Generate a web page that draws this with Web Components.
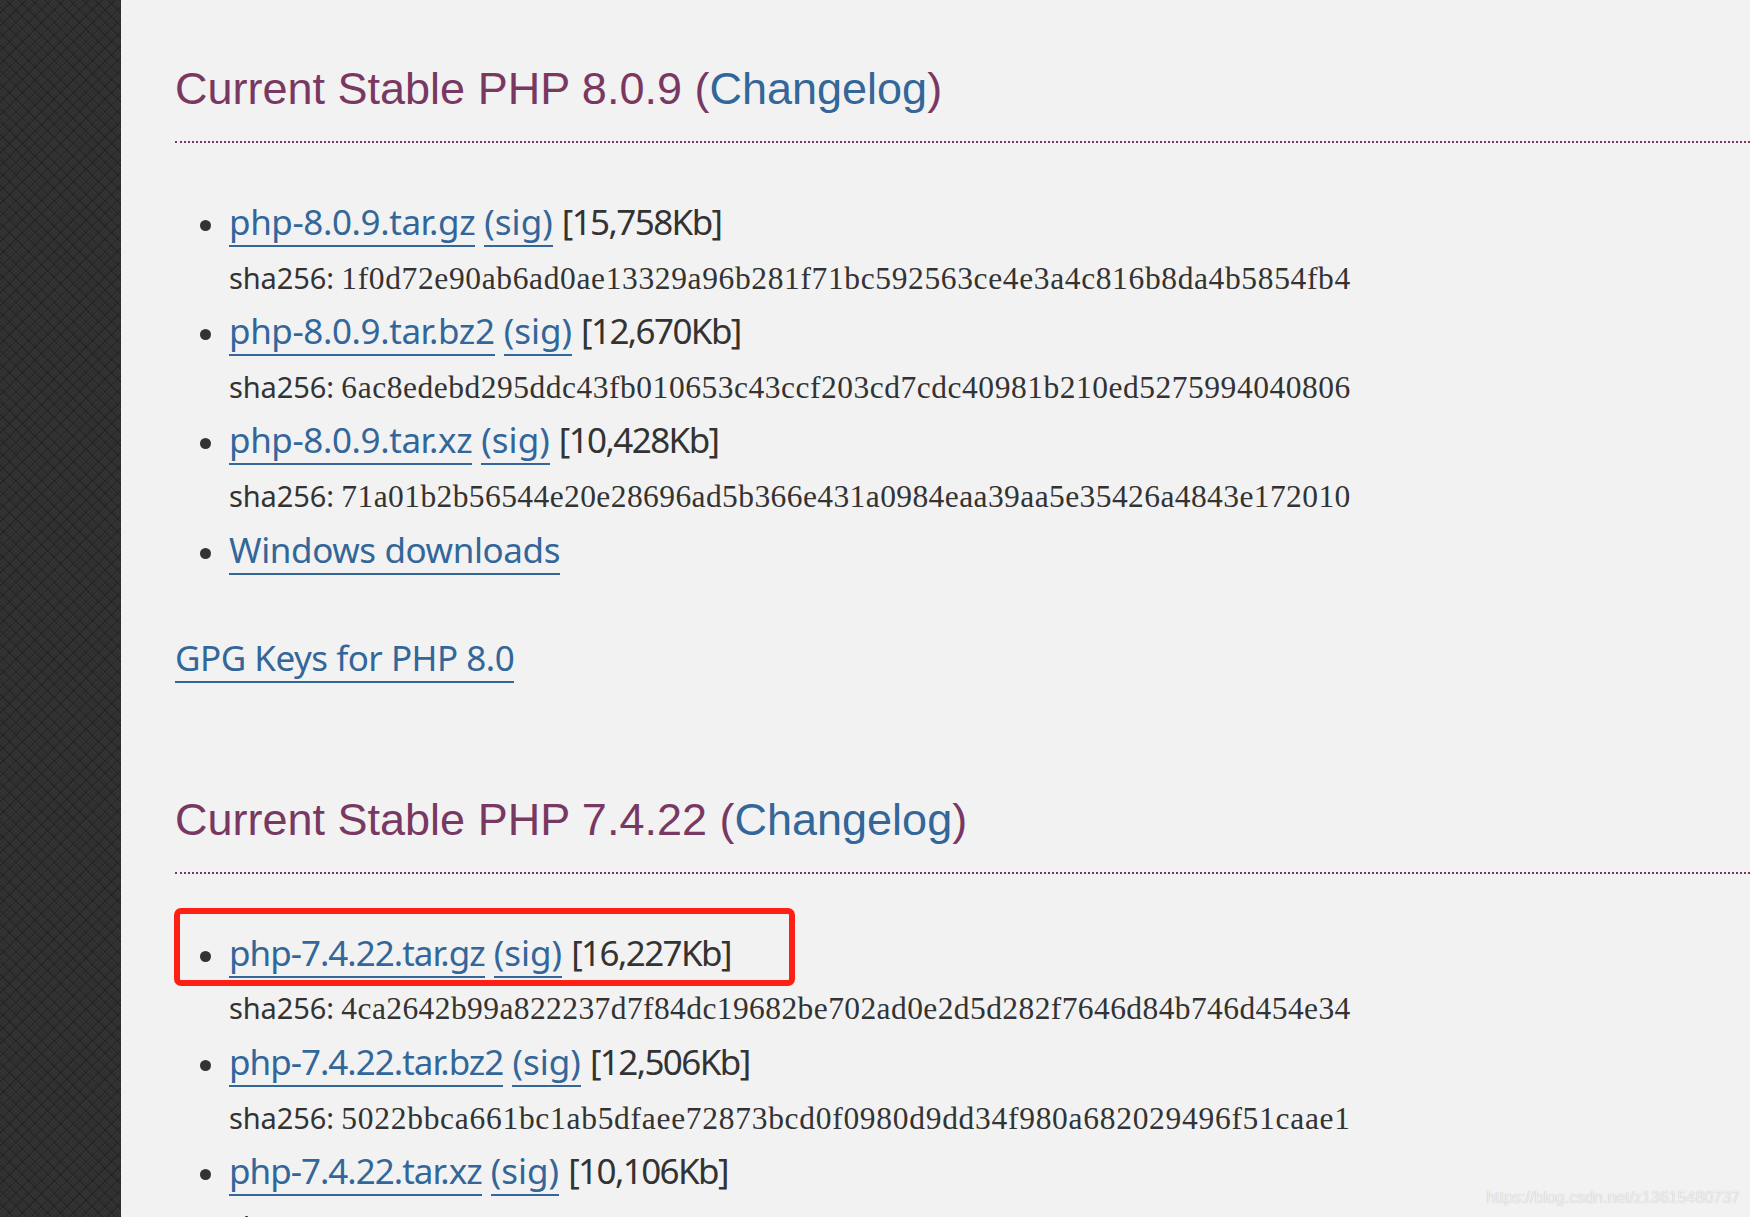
<!DOCTYPE html>
<html>
<head>
<meta charset="utf-8">
<title>Downloads</title>
<style>
  html, body { margin: 0; height: 100%; overflow: hidden; background: #f2f2f2; }
</style>
</head>
<body>
<download-page>
  <release-section version="8.0.9">
    <release-file track="-0.4" name="php-8.0.9.tar.gz" size="15,758Kb" hash="1f0d72e90ab6ad0ae13329a96b281f71bc592563ce4e3a4c816b8da4b5854fb4"></release-file>
    <release-file track="-0.4" name="php-8.0.9.tar.bz2" size="12,670Kb" hash="6ac8edebd295ddc43fb010653c43ccf203cd7cdc40981b210ed5275994040806"></release-file>
    <release-file track="-0.4" name="php-8.0.9.tar.xz" size="10,428Kb" hash="71a01b2b56544e20e28696ad5b366e431a0984eaa39aa5e35426a4843e172010"></release-file>
    <release-file track="-0.4" name="Windows downloads"></release-file>
    <a slot="keys" href="#">GPG Keys for PHP 8.0</a>
  </release-section>
  <release-section version="7.4.22">
    <release-file track="-1" name="php-7.4.22.tar.gz" size="16,227Kb" hash="4ca2642b99a822237d7f84dc19682be702ad0e2d5d282f7646d84b746d454e34"></release-file>
    <release-file track="-1" name="php-7.4.22.tar.bz2" size="12,506Kb" hash="5022bbca661bc1ab5dfaee72873bcd0f0980d9dd34f980a682029496f51caae1"></release-file>
    <release-file track="-1" name="php-7.4.22.tar.xz" size="10,106Kb" hash=""></release-file>
  </release-section>
</download-page>

<script>
class DownloadPage extends HTMLElement {
  constructor () {
    super()
    this.shadow = this.attachShadow({ mode: 'open' })
  }

  connectedCallback () {
    this.shadow.innerHTML =
      /* html */`
      <style>
      :host {
        display: flex;
        height: 1217px;
        overflow: hidden;
        position: relative;
        background: #f2f2f2;
      }

      .sidebar {
        flex: 0 0 121px;
        background-color: #343434;
        background-image:
          repeating-linear-gradient(45deg, rgba(0, 0, 0, 0.14) 0 2px, transparent 2px 9px),
          repeating-linear-gradient(-45deg, rgba(0, 0, 0, 0.14) 0 2px, transparent 2px 9px),
          repeating-linear-gradient(45deg, rgba(0, 0, 0, 0.08) 0 1px, transparent 1px 3px),
          repeating-linear-gradient(-45deg, rgba(0, 0, 0, 0.08) 0 1px, transparent 1px 3px);
      }

      .content {
        flex: 1;
        min-width: 0;
        padding: 62px 0 0 54px;
      }

      .mark {
        position: absolute;
        box-sizing: border-box;
        left: 174px;
        top: 908px;
        width: 621px;
        height: 78px;
        border: 6px solid #ff2015;
        border-radius: 7px;
      }

      .watermark {
        position: absolute;
        right: 10px;
        top: 1189px;
        font: 16px "Liberation Sans", sans-serif;
        color: rgba(255, 255, 255, 0.8);
        text-shadow: 0 0 1px rgba(0, 0, 0, 0.3);
      }
      </style>

      <div class="sidebar"></div>
      <div class="content"><slot></slot></div>
      <div class="mark"></div>
      <div class="watermark">https://blog.csdn.net/z13615480737</div>
      `
  }
}

class ReleaseSection extends HTMLElement {
  constructor () {
    super()
    this.shadow = this.attachShadow({ mode: 'open' })
  }

  connectedCallback () {
    const version = this.getAttribute('version')
    this.shadow.innerHTML =
      /* html */`
      <style>
      :host {
        display: block;
        margin-bottom: 107px;
      }

      h3 {
        margin: 0;
        font: 400 45px/54px "Liberation Sans", sans-serif;
        color: #793862;
        padding-bottom: 25px;
        border-bottom: 2px dotted #793862;
      }

      h3 a {
        color: #336699;
        text-decoration: none;
      }

      ul {
        list-style: none;
        margin: 0;
        padding: 53px 0 0 0;
      }

      .keys {
        margin-top: 53px;
        font: 35px/54.6px "Noto Sans", sans-serif;
      }

      ::slotted(a) {
        color: #336699;
        text-decoration: none;
        border-bottom: 2px solid #336699;
        letter-spacing: -0.5px;
      }
      </style>

      <h3>Current Stable PHP ${version} (<a href="#">Changelog</a>)</h3>
      <ul><slot></slot></ul>
      <div class="keys"><slot name="keys"></slot></div>
      `
  }
}

class ReleaseFile extends HTMLElement {
  constructor () {
    super()
    this.shadow = this.attachShadow({ mode: 'open' })
  }

  connectedCallback () {
    const name = this.getAttribute('name')
    const size = this.getAttribute('size')
    const hash = this.getAttribute('hash')
    const track = this.getAttribute('track') || '0'
    this.shadow.innerHTML =
      /* html */`
      <style>
      :host {
        display: flow-root;
        position: relative;
        padding-left: 54px;
        font: 35px/54.6px "Noto Sans", sans-serif;
        color: #333333;
      }

      :host::before {
        content: "";
        position: absolute;
        left: 25px;
        top: 24px;
        width: 11px;
        height: 11px;
        border-radius: 50%;
        background: #333333;
      }

      a {
        color: #336699;
        text-decoration: none;
        border-bottom: 2px solid #336699;
      }

      .line {
        margin: -1px 0 1px;
      }

      .name {
        letter-spacing: ${track}px;
      }

      .size {
        letter-spacing: -1.6px;
      }

      .sha {
        font-size: 29px;
        letter-spacing: -0.1px;
      }

      code {
        font: 31.5px "Liberation Serif", serif;
      }
      </style>

      <div class="line">
        <a class="name" href="#">${name}</a>
        ${size ? `<a href="#">(sig)</a> <span class="size">[${size}]</span>` : ''}
      </div>
      ${hash !== null ? `<div class="sha">sha256: <code>${hash}</code></div>` : ''}
      `

    // the hash font of the original is monospaced, so stretch each one to the same width
    const code = this.shadow.querySelector('code')
    if (code && hash) {
      const width = code.getBoundingClientRect().width
      code.style.letterSpacing = `${(1003 - width) / hash.length}px`
    }
  }
}

customElements.define('download-page', DownloadPage)
customElements.define('release-section', ReleaseSection)
customElements.define('release-file', ReleaseFile)
</script>
</body>
</html>
